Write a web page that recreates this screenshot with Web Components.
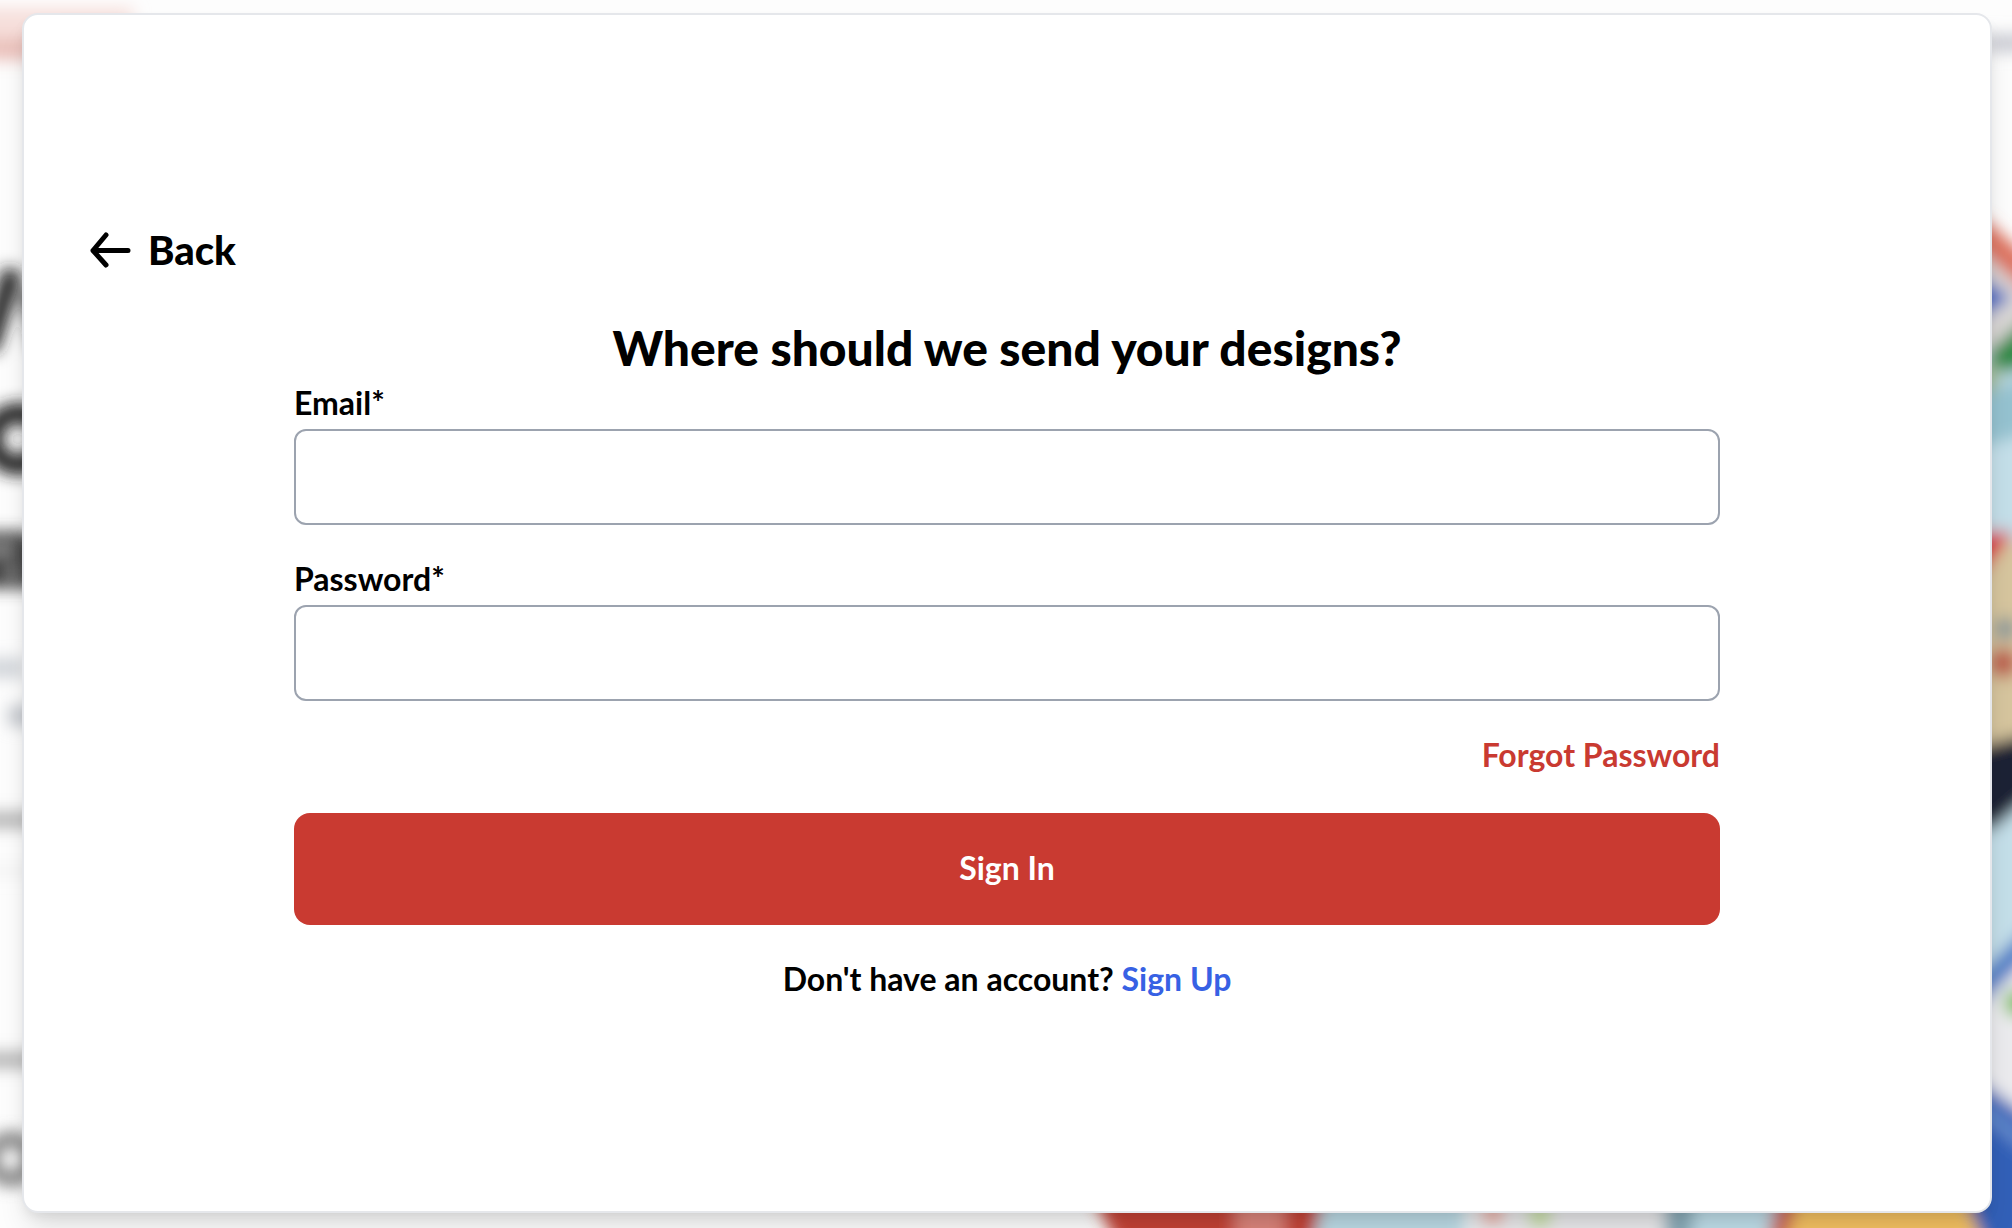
<!DOCTYPE html>
<html lang="en">
<head>
<meta charset="utf-8">
<meta name="viewport" content="width=device-width, initial-scale=1">
<title>Sign In</title>
<style>
  html, body { margin: 0; height: 100%; }
  body { font-family: Lato, "Open Sans", sans-serif; color: #000; background: #fdfdfd; }
</style>
</head>
<body>
<sign-in-page></sign-in-page>

<template id="backdrop">
  <style>
    :host { position: absolute; inset: 0; overflow: hidden; z-index: -1; }
    svg { display: block; width: 100%; height: 100%; }
  </style>
  <svg viewBox="0 0 2012 1228" preserveAspectRatio="none" aria-hidden="true">
    <defs>
      <filter id="soft" filterUnits="userSpaceOnUse" x="-60" y="-60" width="2132" height="1348"><feGaussianBlur stdDeviation="8"/></filter>
    </defs>
    <g filter="url(#soft)">
      <!-- page logo and header -->
      <path d="M-30 8H125Q140 8 132 20L110 60H-30Z" fill="#f6dfdb"/>
      <rect x="-30" y="38" width="80" height="22" fill="#eac0ba"/>
      <rect x="1985" y="34" width="60" height="18" fill="#c9cad2"/>
      <!-- headline -->
      <path d="M-12 350L13 270M32 290L44 350" stroke="#222" stroke-width="20" fill="none"/>
      <circle cx="18" cy="439" r="26" fill="none" stroke="#222" stroke-width="20"/>
      <path d="M-20 532H24L44 540V588H-20Z" fill="#3c3c3c"/>
      <path d="M-12 550H14M6 572H18" stroke="#999" stroke-width="10"/>
      <rect x="-30" y="658" width="54" height="20" fill="#d2d5da"/>
      <rect x="8" y="706" width="50" height="20" fill="#c3c6cc"/>
      <rect x="-30" y="812" width="70" height="16" fill="#b2b2b2"/>
      <rect x="-30" y="865" width="70" height="12" fill="#f4f4f4"/>
      <rect x="-30" y="1052" width="70" height="16" fill="#b2b2b2"/>
      <circle cx="11" cy="1159" r="20" fill="none" stroke="#777" stroke-width="14"/>
      <!-- illustration, right side -->
      <path d="M1960 330H2060V1100H1960Z" fill="#c4dfe9"/>
      <path d="M1960 250H2060V350H1960Z" fill="#dad7d6"/>
      <path d="M1975 228L2040 286" stroke="#dd705c" stroke-width="26"/>
      <path d="M1965 266L2012 298L1965 328Z" fill="#4568c4"/>
      <path d="M1986 355L2040 305V366L1996 374Z" fill="#2f8a46"/>
      <path d="M1970 365H1998V395H1970Z" fill="#a5bd98"/>
      <path d="M1970 400L2040 370V430L1970 450Z" fill="#95c2d0"/>
      <path d="M1960 542H2050V746H1960Z" fill="#d6c59e"/>
      <path d="M1960 532H2014L1978 578H1960Z" fill="#dc2c40"/>
      <circle cx="2005" cy="629" r="11" fill="#7f9298"/>
      <circle cx="2003" cy="663" r="15" fill="#bb5a48"/>
      <path d="M1960 752L2050 728V780L1992 830H1960Z" fill="#1c2236"/>
      <path d="M1970 1000L2050 925V1120H1970Z" fill="#ebebee"/>
      <path d="M1970 1000L2040 930" stroke="#477ac6" stroke-width="22"/>
      <circle cx="2018" cy="1003" r="14" fill="#7fbd60"/>
      <path d="M1950 1060L2060 1140V1260H1950Z" fill="#3260b8"/>
      <path d="M1980 1108L2030 1148" stroke="#6a90cf" stroke-width="12"/>
      <!-- illustration, below the card -->
      <path d="M1090 1190H1325L1310 1260H1125Z" fill="#c44234"/>
      <path d="M1235 1190H1285V1260H1235Z" fill="#db857b"/>
      <path d="M1325 1190H1465V1260H1310Z" fill="#bcdbe6"/>
      <path d="M1470 1190H1670V1260H1470Z" fill="#eaeaec"/>
      <circle cx="1493" cy="1214" r="10" fill="#ee9a86"/>
      <circle cx="1540" cy="1216" r="11" fill="#c0dd8c"/>
      <path d="M1665 1190H1700L1690 1260H1665Z" fill="#86a8b5"/>
      <path d="M1695 1190H1780L1765 1260H1690Z" fill="#c0dfea"/>
      <path d="M1778 1190H1805L1785 1260H1764Z" fill="#cc6259"/>
      <path d="M1800 1190H1962L1990 1260H1782Z" fill="#f5c262"/>
    </g>
  </svg>
</template>

<template id="back">
  <style>
    :host { display: block; }
    button { display: flex; align-items: center; gap: 16px; padding: 0; border: 0; background: none; color: inherit; font: 900 40px/48px "Lato Black", Lato, "Open Sans", sans-serif; cursor: pointer; }
    svg { width: 44px; height: 36px; }
  </style>
  <button type="button">
    <svg viewBox="0 0 44 36" fill="none" stroke="currentColor" stroke-width="5" stroke-linecap="round" stroke-linejoin="round" aria-hidden="true"><path d="M18 3L5 18.500L18 33M5 18.500H40"/></svg>
    <slot></slot>
  </button>
</template>

<template id="field">
  <style>
    :host { display: flex; flex-direction: column; gap: 2px; }
    label { font-size: 32px; line-height: 48px; font-weight: 700; }
    input { box-sizing: border-box; width: 100%; height: 96px; padding: 0 24px; border: 2px solid #9ca3af; border-radius: 12px; background: #fff; font: inherit; font-size: 32px; outline: none; }
  </style>
  <label for="control"></label>
  <input id="control">
</template>

<template id="action">
  <style>
    :host { display: block; }
    button { display: block; width: 100%; padding: 31px 32px 33px; border: 0; border-radius: 16px; background: #c93a31; color: #fff; font: inherit; font-size: 32px; line-height: 48px; font-weight: 700; cursor: pointer; }
  </style>
  <button type="button"><slot></slot></button>
</template>

<template id="link">
  <style>
    :host { display: inline; color: #3761e4; }
    a { color: inherit; text-decoration: none; }
  </style>
  <a href="#"><slot></slot></a>
</template>

<template id="page">
  <style>
    :host { display: flex; box-sizing: border-box; min-height: 100%; padding: 13px 20px 15px 22px; position: relative; z-index: 0; }
    main { flex: 1; box-sizing: border-box; padding: 211px 64px 64px; border: 2px solid #e5e7eb; border-radius: 16px; background: #fff; box-shadow: 0 20px 30px -6px rgba(0,0,0,.12), 0 6px 14px -4px rgba(0,0,0,.1); }
    form { display: flex; flex-direction: column; gap: 30px; margin: 43px 206px 0; font-size: 32px; line-height: 48px; font-weight: 700; }
    header { display: flex; flex-direction: column; }
    h1 { margin: 0; font-family: "Lato Black", Lato, "Open Sans", sans-serif; font-size: 48px; line-height: 62px; font-weight: 900; text-align: center; }
    .forgot { text-align: right; padding-bottom: 4px; }
    .forgot text-link { color: #c93a31; }
    p { margin: 0; text-align: center; }
  </style>
  <page-backdrop></page-backdrop>
  <main>
    <back-button>Back</back-button>
    <form>
      <header>
        <h1>Where should we send your designs?</h1>
        <form-field label="Email*" type="email"></form-field>
      </header>
      <form-field label="Password*" type="password"></form-field>
      <div class="forgot"><text-link>Forgot Password</text-link></div>
      <action-button>Sign In</action-button>
      <p>Don't have an account? <text-link>Sign Up</text-link></p>
    </form>
  </main>
</template>

<script>
  class TemplateElement extends HTMLElement {
    constructor() {
      super();
      const template = document.getElementById(this.constructor.template);
      this.attachShadow({ mode: "open" }).append(template.content.cloneNode(true));
    }
  }
  class PageBackdrop extends TemplateElement { static template = "backdrop"; }
  class BackButton extends TemplateElement { static template = "back"; }
  class ActionButton extends TemplateElement { static template = "action"; }
  class TextLink extends TemplateElement { static template = "link"; }
  class SignInPage extends TemplateElement { static template = "page"; }
  class FormField extends TemplateElement {
    static template = "field";
    connectedCallback() {
      this.shadowRoot.querySelector("label").textContent = this.getAttribute("label");
      this.shadowRoot.querySelector("input").type = this.getAttribute("type") || "text";
    }
  }
  customElements.define("page-backdrop", PageBackdrop);
  customElements.define("back-button", BackButton);
  customElements.define("form-field", FormField);
  customElements.define("action-button", ActionButton);
  customElements.define("text-link", TextLink);
  customElements.define("sign-in-page", SignInPage);
</script>
</body>
</html>
